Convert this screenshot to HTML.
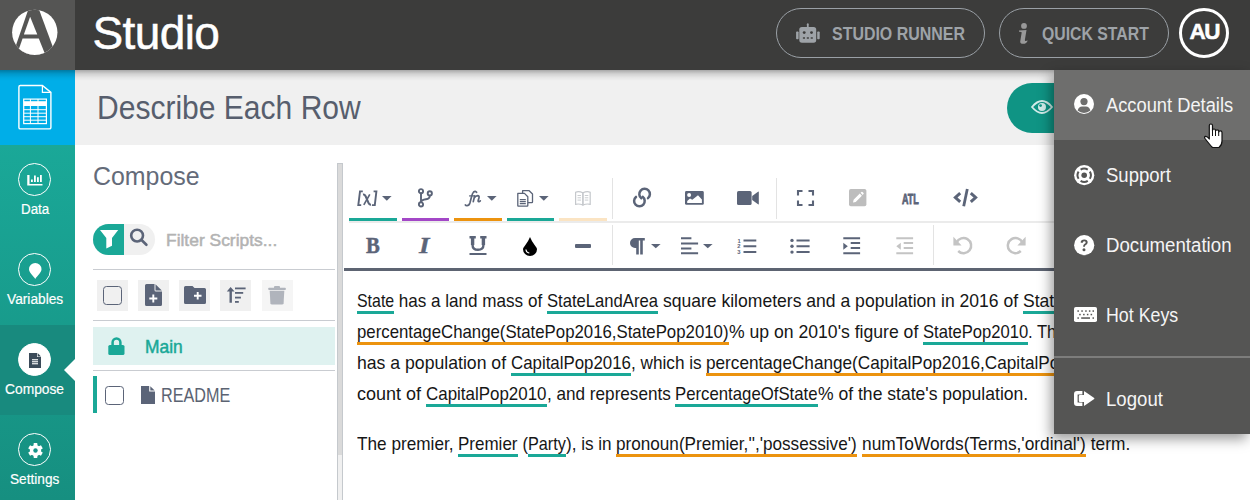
<!DOCTYPE html>
<html><head><meta charset="utf-8">
<style>
*{box-sizing:border-box;margin:0;padding:0}
html,body{width:1250px;height:500px;overflow:hidden;background:#fff;font-family:"Liberation Sans",sans-serif}
.a{position:absolute}
.sx{position:absolute;white-space:nowrap;transform-origin:0 0;line-height:1}
svg{position:absolute;overflow:visible}
#top{left:0;top:0;width:1250px;height:70px;background:#3c3c3b}
#logo{left:0;top:0;width:75px;height:70px;background:#555554}
.pill{border:1px solid #9aa0a6;border-radius:25px;height:50px;top:8px}
.pilltxt{font-weight:bold;font-size:18px;color:#9ea3a8}
#side{left:0;top:70px;width:75px;height:430px;background:linear-gradient(#1aa898 0px,#1aa898 75px,#168f80 430px)}
#blue{left:0;top:70px;width:75px;height:75px;background:#00aee8}
#active{left:0;top:325px;width:75px;height:90px;background:#188a7e}
.navc{left:18px;width:33px;height:33px;border:1px solid #fff;border-radius:50%}
.navt{color:#fff;font-size:15.5px;-webkit-text-stroke:0.2px #fff}
#hdr{left:75px;top:70px;width:1175px;height:75px;background:#f0f0f0}
#topshadow{left:0;top:70px;width:1250px;height:11px;background:linear-gradient(rgba(0,0,0,.3),rgba(0,0,0,.13) 35%,rgba(0,0,0,.04) 70%,rgba(0,0,0,0))}
#eyebtn{left:1007px;top:83px;width:120px;height:50px;border-radius:25px;background:#0f9484}
#splitter{left:337px;top:163px;width:6px;height:340px;background:linear-gradient(#dadada 0,#dadada 291px,#f0f0f0 291px);border:1px solid #c5c9cd}
#menu{left:1054px;top:70px;width:196px;height:364px;background:#555554;box-shadow:-3px 5px 12px rgba(0,0,0,.4)}
.mit{font-size:20px;color:#f4f4f4}
.ln{position:absolute;left:357px;font-size:17.2px;line-height:20px;color:#1e1e1e;white-space:nowrap}
.tw{position:absolute;box-sizing:content-box;height:20.4px;line-height:20px;font-size:17.8px;color:#161616;white-space:pre}
.tw span{display:inline-block;transform-origin:0 0}
.v{border-bottom:3px solid #1aa897}
.f{border-bottom:3px solid #ec930f}
.ib{background:#f0f0f0;width:31px;height:31px;top:280px}
.hl{height:1px;background:#c9ccd1;left:93px;width:242px}
.ul{top:218px;height:3px}
</style></head><body>
<!-- TOP BAR -->
<div id="top" class="a"></div>
<div id="logo" class="a"></div>
<svg style="left:8px;top:6px" width="54" height="54" viewBox="0 0 500 500">
  <defs><clipPath id="lc"><circle cx="248" cy="244" r="210"/></clipPath></defs>
  <circle cx="248" cy="244" r="210" fill="#fff"/>
  <g clip-path="url(#lc)">
    <polygon points="199,0 275,0 460,500 27,500" fill="#555554"/>
    <polygon points="205,100 271,265 147,265" fill="#fff"/>
    <polygon points="135,300 285,300 365,500 65,500" fill="#fff"/>
  </g>
</svg>
<div class="sx" style="left:92.5px;top:9.5px;font-size:46px;color:#fff;letter-spacing:-0.6px;-webkit-text-stroke:0.5px #fff">Studio</div>

<div class="a pill" style="left:776px;width:209px"></div>
<svg style="left:796px;top:23px" width="24" height="20" viewBox="0 0 24 20">
  <rect x="10.9" y="0.3" width="1.8" height="5" rx="0.9" fill="#9ea3a8"/>
  <rect x="3.3" y="3.9" width="16.9" height="15.8" rx="2.6" fill="#9ea3a8"/>
  <rect x="0.1" y="8.5" width="2.5" height="7.7" rx="0.8" fill="#9ea3a8"/>
  <rect x="21.2" y="8.5" width="2.5" height="7.7" rx="0.8" fill="#9ea3a8"/>
  <circle cx="8.2" cy="9.6" r="1.45" fill="#3c3c3b"/>
  <circle cx="15.5" cy="9.6" r="1.45" fill="#3c3c3b"/>
  <rect x="6.9" y="14.3" width="2.1" height="1.4" fill="#3c3c3b"/>
  <rect x="10.8" y="14.3" width="2.1" height="1.4" fill="#3c3c3b"/>
  <rect x="14.7" y="14.3" width="2.1" height="1.4" fill="#3c3c3b"/>
</svg>
<div class="sx pilltxt" style="left:832px;top:25px;transform:scaleX(0.886)">STUDIO RUNNER</div>

<div class="a pill" style="left:999px;width:170px"></div>
<svg style="left:1018px;top:23px" width="11" height="21" viewBox="0 0 11 21">
  <circle cx="6" cy="2.9" r="2.9" fill="#999"/>
  <path d="M1 7.4 Q4.5 7 8.5 7 L6.9 16.8 Q6.7 18.2 7.6 18.1 L9.7 17.4 Q8.6 20.8 5.2 20.8 Q2 20.8 2.2 18.4 L3.7 9.6 Q3.8 8.7 1 8.8 Z" fill="#999"/>
</svg>
<div class="sx pilltxt" style="left:1042px;top:25px;transform:scaleX(0.878)">QUICK START</div>

<div class="a" style="left:1179px;top:8px;width:50px;height:50px;border:3px solid #fff;border-radius:50%"></div>
<div class="sx" style="left:1189.5px;top:21px;font-size:22.5px;font-weight:bold;color:#fff;letter-spacing:-1.6px;-webkit-text-stroke:0.5px #fff">AU</div>

<!-- SIDEBAR -->
<div id="side" class="a"></div>
<div id="blue" class="a"></div>
<div id="active" class="a"></div>
<svg style="left:0;top:70px" width="75" height="75" viewBox="0 0 75 75">
  <path d="M20 15.5 H42.4 L50.9 22.4 V57.4 Q50.9 58.9 49.4 58.9 H20.4 Q18.9 58.9 18.9 57.4 V17 Q18.9 15.5 20.4 15.5 Z" fill="none" stroke="#fff" stroke-width="1.4"/>
  <path d="M42.4 15.5 V22.4 H50.9" fill="none" stroke="#fff" stroke-width="1.2"/>
  <rect x="23.7" y="29.1" width="22.7" height="24.5" fill="none" stroke="#fff" stroke-width="1.2"/>
  <rect x="23.7" y="31.2" width="22.7" height="4.8" fill="#fff"/>
  <path d="M30.4 29 V53.6 M38 29 V53.6 M23.7 39.7 H46.4 M23.7 43.2 H46.4 M23.7 46.7 H46.4 M23.7 50.2 H46.4" stroke="#fff" stroke-width="1"/>
</svg>

<div class="a navc" style="top:163px"></div>
<svg style="left:27px;top:175px" width="16" height="11" viewBox="0 0 16 11">
  <path d="M0.25 0 V10.5 H15.5 V9 H2.5 V0 Z" fill="#fff"/>
  <rect x="4" y="4.5" width="1.8" height="2.5" fill="#fff"/>
  <rect x="7" y="0.5" width="1.8" height="6.5" fill="#fff"/>
  <rect x="10" y="2.2" width="1.8" height="4.8" fill="#fff"/>
  <rect x="13" y="0" width="1.8" height="7" fill="#fff"/>
</svg>
<div class="sx navt" style="left:21px;top:201px;transform:scaleX(0.86)">Data</div>

<div class="a navc" style="top:253px"></div>
<svg style="left:28.8px;top:262.5px" width="12.5" height="16" viewBox="0 0 12.5 16">
  <path d="M6.25 16 C4.5 13 0 9.5 0 6.25 A6.25 6.25 0 0 1 12.5 6.25 C12.5 9.5 8 13 6.25 16 Z" fill="#fff"/>
</svg>
<div class="sx navt" style="left:6.5px;top:291px;transform:scaleX(0.885)">Variables</div>

<div class="a navc" style="top:343px;background:#fff"></div>
<svg style="left:29px;top:352.75px" width="12" height="15" viewBox="0 0 12 15">
  <path d="M0 0 H8 V4 H12 V15 H0 Z" fill="#3b4a59"/>
  <path d="M8.6 0 L12 3.4 H8.6 Z" fill="#3b4a59"/>
  <rect x="3" y="6.2" width="6" height="1.1" fill="#fff"/>
  <rect x="3" y="8.2" width="6" height="1.1" fill="#fff"/>
  <rect x="3" y="10.2" width="6" height="1.1" fill="#fff"/>
</svg>
<div class="sx navt" style="left:5.3px;top:381px;transform:scaleX(0.89)">Compose</div>
<svg style="left:63px;top:358px" width="12" height="24" viewBox="0 0 12 24"><polygon points="1,12 12,1 12,23" fill="#fff"/></svg>

<div class="a navc" style="top:433px"></div>
<svg style="left:27.5px;top:443px" width="15" height="15" viewBox="-7.5 -7.5 15 15">
  <g fill="#fff">
    <circle r="5.6"/>
    <rect x="-1.9" y="-7.4" width="3.8" height="3.5" rx="0.6"/>
    <rect x="-1.9" y="-7.4" width="3.8" height="3.5" rx="0.6" transform="rotate(60)"/>
    <rect x="-1.9" y="-7.4" width="3.8" height="3.5" rx="0.6" transform="rotate(120)"/>
    <rect x="-1.9" y="-7.4" width="3.8" height="3.5" rx="0.6" transform="rotate(180)"/>
    <rect x="-1.9" y="-7.4" width="3.8" height="3.5" rx="0.6" transform="rotate(240)"/>
    <rect x="-1.9" y="-7.4" width="3.8" height="3.5" rx="0.6" transform="rotate(300)"/>
  </g>
  <circle r="2.2" fill="#16938a"/>
</svg>
<div class="sx navt" style="left:10.3px;top:471px;transform:scaleX(0.88)">Settings</div>

<!-- HEADER -->
<div id="hdr" class="a"></div>
<div class="sx" style="left:97px;top:90.7px;font-size:33px;color:#575e6d;transform:scaleX(0.91)">Describe Each Row</div>
<div id="eyebtn" class="a"></div>
<svg style="left:1031px;top:100px" width="22" height="14" viewBox="0 0 22 14">
  <path d="M1 7 Q11 -5 21 7 Q11 19 1 7 Z" fill="none" stroke="#d3ecea" stroke-width="1.8"/>
  <circle cx="11" cy="7" r="4" fill="#d3ecea"/>
  <circle cx="9.6" cy="5.6" r="1.4" fill="#0f9484"/>
</svg>
<div id="topshadow" class="a"></div>


<!-- COMPOSE PANEL -->
<div class="sx" style="left:93px;top:162.5px;font-size:26.5px;color:#646b79;transform:scaleX(0.94)">Compose</div>
<div class="a" style="left:93px;top:224px;width:62px;height:31px;border-radius:15.5px;background:#f0f0f0;overflow:hidden"><div class="a" style="left:0;top:0;width:31px;height:31px;background:#1aa897"></div></div>
<svg style="left:100px;top:230px" width="18" height="19" viewBox="0 0 18 19">
  <path d="M0 0 H18.2 L12 8 V15.8 L6.3 18.6 V8 Z" fill="#fff"/>
</svg>
<svg style="left:129px;top:228px" width="19" height="18" viewBox="0 0 19 18">
  <circle cx="8.1" cy="7.6" r="5.9" fill="none" stroke="#5b6478" stroke-width="2.6"/>
  <path d="M12.3 11.8 L17.4 16.8" stroke="#5b6478" stroke-width="2.6" stroke-linecap="round"/>
</svg>
<div class="sx" style="left:165.8px;top:231.5px;font-size:16.5px;color:#b3b3b3;-webkit-text-stroke:0.5px #b3b3b3;transform:scaleX(1.055)">Filter Scripts...</div>

<div class="a hl" style="top:269px"></div>
<div class="a ib" style="left:97px"></div>
<div class="a" style="left:103px;top:286px;width:19px;height:19px;border:1.7px solid #5b6478;border-radius:3.5px"></div>
<div class="a ib" style="left:138px"></div>
<svg style="left:145px;top:284px" width="17" height="22" viewBox="0 0 17 22">
  <path d="M1.5 0 H9.5 V6 Q9.5 7.5 11 7.5 H17 V20.5 Q17 22 15.5 22 H1.5 Q0 22 0 20.5 V1.5 Q0 0 1.5 0 Z" fill="#5b6478"/>
  <path d="M10.5 0.2 L16.8 6.5 H10.5 Z" fill="#5b6478"/>
  <path d="M8.3 10.5 V18.5 M4.3 14.5 H12.3" stroke="#fff" stroke-width="1.9"/>
</svg>
<div class="a ib" style="left:179px"></div>
<svg style="left:184px;top:286px" width="22" height="18" viewBox="0 0 22 18">
  <path d="M1.5 0 H8.5 L10.5 2 H20.5 Q22 2 22 3.5 V16.5 Q22 18 20.5 18 H1.5 Q0 18 0 16.5 V1.5 Q0 0 1.5 0 Z" fill="#5b6478"/>
  <path d="M13.7 6 V13.5 M10 9.8 H17.5" stroke="#fff" stroke-width="1.9"/>
</svg>
<div class="a ib" style="left:220px"></div>
<svg style="left:226px;top:287px" width="20" height="16" viewBox="0 0 20 16">
  <path d="M4.6 0 L8.6 4.5 H5.9 V15.8 H3.5 V4.5 H0.8 Z" fill="#5b6478"/>
  <rect x="9" y="0.5" width="10.6" height="1.8" fill="#5b6478"/>
  <rect x="9" y="5" width="8.2" height="1.8" fill="#5b6478"/>
  <rect x="9" y="9.7" width="5.9" height="1.8" fill="#5b6478"/>
  <rect x="9" y="14" width="3.8" height="1.8" fill="#5b6478"/>
</svg>
<div class="a ib" style="left:262px;background:#f5f5f5"></div>
<svg style="left:268px;top:286px" width="18" height="19" viewBox="0 0 18 19">
  <path d="M6 0.5 Q6 0 7 0 H11 Q12 0 12 0.5 V2 H6 Z" fill="#b0b4bc"/>
  <rect x="0.4" y="1.8" width="17.3" height="2.1" rx="0.5" fill="#b0b4bc"/>
  <path d="M1.7 4.8 H16.3 L15.6 17.3 Q15.4 18.5 14 18.5 H4 Q2.6 18.5 2.4 17.3 Z" fill="#b0b4bc"/>
</svg>

<div class="a hl" style="top:320px"></div>
<div class="a" style="left:93px;top:326.5px;width:242px;height:38.5px;background:#dff2f0"></div>
<svg style="left:107.5px;top:337px" width="17" height="18" viewBox="0 0 17 18">
  <path d="M4.6 8 V5.3 A3.9 3.9 0 0 1 12.4 5.3 V8" fill="none" stroke="#1aa897" stroke-width="2.5"/>
  <rect x="0.3" y="8" width="16.2" height="10" rx="1.6" fill="#1aa897"/>
</svg>
<div class="sx" style="left:145px;top:338.3px;font-size:18.5px;color:#1aa897;-webkit-text-stroke:0.5px #1aa897;transform:scaleX(0.94)">Main</div>
<div class="a hl" style="top:370px"></div>
<div class="a" style="left:93px;top:376px;width:4px;height:37px;background:#1aa897"></div>
<div class="a" style="left:104.7px;top:385.7px;width:19.3px;height:19.3px;border:1.7px solid #5b6478;border-radius:3.5px"></div>
<svg style="left:140.5px;top:386px" width="14" height="18" viewBox="0 0 14 18">
  <path d="M0 0 H8.2 V5.6 H14 V18 H0 Z" fill="#5b6478"/>
  <path d="M9.3 0.3 L13.7 4.6 H9.3 Z" fill="#5b6478"/>
</svg>
<div class="sx" style="left:161px;top:385.3px;font-size:20px;color:#5b6372;transform:scaleX(0.81)">README</div>

<div id="splitter" class="a"></div>

<!-- EDITOR TOOLBAR -->
<div class="a ul" style="left:349px;width:48px;background:#1aa897"></div>
<div class="a ul" style="left:402px;width:47px;background:#a347c7"></div>
<div class="a ul" style="left:454px;width:48px;background:#ec930f"></div>
<div class="a ul" style="left:507px;width:47px;background:#1aa897"></div>
<div class="a ul" style="left:559px;width:48px;background:#fbe4c3"></div>
<div class="a" style="left:349px;top:221px;width:901px;height:2px;background:#ebebeb"></div>
<div class="a" style="left:612px;top:178px;width:1px;height:41px;background:#e3e3e3"></div>
<div class="a" style="left:776px;top:178px;width:1px;height:41px;background:#e3e3e3"></div>
<div class="a" style="left:612px;top:225px;width:1px;height:40px;background:#e3e3e3"></div>
<div class="a" style="left:933px;top:225px;width:1px;height:40px;background:#e3e3e3"></div>
<div class="a" style="left:344px;top:268px;width:906px;height:3px;background:#5d6472"></div>


<!-- row1 -->
<svg style="left:352px;top:184px" width="30" height="28" viewBox="0 0 30 28">
  <g fill="none" stroke="#5b6478" stroke-linecap="butt">
    <path d="M10.8 7.4 H8 L6.3 21.1 H9.2" stroke-width="1.9"/>
    <path d="M21.6 7.4 H24.4 L22.8 21.1 H20" stroke-width="1.9"/>
    <path d="M11 10.5 Q12.6 10.2 13.6 12.2 L16.6 19.2 Q17.4 21 19 20.6" stroke-width="2.1"/>
    <path d="M17.8 10.4 L11.8 20.8" stroke-width="1.7"/>
  </g>
</svg>
<svg style="left:382px;top:196px" width="10" height="5" viewBox="0 0 10 5"><polygon points="0,0 9.6,0 4.8,4.8" fill="#5b6478"/></svg>
<svg style="left:417px;top:188px" width="16" height="19" viewBox="0 0 16 19">
  <g fill="none" stroke="#5b6478" stroke-width="1.9">
    <circle cx="4" cy="3.2" r="2.1"/><circle cx="12.8" cy="5.4" r="2.1"/><circle cx="4" cy="16.4" r="2.1"/>
    <path d="M4 5.5 V14.1 M12.8 7.7 Q12.8 10.8 9 11.3 Q4.5 11.8 4 14"/>
  </g>
</svg>
<svg style="left:460px;top:184px" width="24" height="24" viewBox="0 0 24 24">
  <g fill="none" stroke="#5b6478" stroke-linecap="round">
    <path d="M16.6 8.3 Q15.4 6.6 13.6 8 Q12.4 9.2 11.6 12.5 L9.9 19 Q9.1 21.7 7 21.7 Q5.7 21.7 5.3 20.9" stroke-width="1.7"/>
    <path d="M9.6 11.9 H14.6" stroke-width="1.3"/>
    <path d="M14.6 12 L13.3 17.6 M14.1 14 Q15.6 11.7 17.7 11.7 Q19.5 11.8 19 13.7 L18.2 16.5 Q17.9 17.8 18.8 17.7 Q19.5 17.5 20.3 16.8" stroke-width="1.7"/>
  </g>
</svg>
<svg style="left:487px;top:196px" width="10" height="5" viewBox="0 0 10 5"><polygon points="0,0 9.6,0 4.8,4.8" fill="#5b6478"/></svg>
<svg style="left:517px;top:190px" width="17" height="17" viewBox="0 0 17 17">
  <g fill="#fff" stroke="#5b6478" stroke-width="1.3" stroke-linejoin="round">
    <path d="M5.6 0.7 H12.2 L15.5 4 V12 Q15.5 12.6 14.9 12.6 H6.2 Q5.6 12.6 5.6 12 Z"/>
    <path d="M0.8 3.4 H7.5 L10.8 6.7 V15.6 Q10.8 16.2 10.2 16.2 H1.4 Q0.8 16.2 0.8 15.6 Z"/>
  </g>
  <path d="M2.8 9.6 H8.8 M2.8 11.6 H8.8 M2.8 13.6 H8.8" stroke="#5b6478" stroke-width="1.1"/>
</svg>
<svg style="left:539px;top:196px" width="10" height="5" viewBox="0 0 10 5"><polygon points="0,0 9.6,0 4.8,4.8" fill="#5b6478"/></svg>
<svg style="left:574.5px;top:191px" width="16" height="15" viewBox="0 0 16 15">
  <g fill="none" stroke="#c5c8cc" stroke-width="1.2">
    <path d="M0.6 1.2 Q4 0 7.8 1.8 V14 Q4 12.4 0.6 13.3 Z"/>
    <path d="M15.2 1.2 Q11.8 0 8 1.8 V14 Q11.8 12.4 15.2 13.3 Z"/>
    <path d="M2.5 4.5 H6 M2.5 6.8 H6 M2.5 9.1 H6 M9.8 4.5 H13.3 M9.8 6.8 H13.3 M9.8 9.1 H13.3" stroke-width="0.9"/>
  </g>
</svg>
<svg style="left:628px;top:184px" width="29" height="27" viewBox="0 0 29 27">
  <g fill="none" stroke="#5b6478" stroke-width="2.5" stroke-linecap="round">
    <path d="M13.34 14.28 A5.3 5.3 0 1 1 20.01 14.16"/>
    <path d="M14.66 12.82 A5.3 5.3 0 1 1 7.99 12.94"/>
  </g>
</svg>
<svg style="left:685px;top:191px" width="19" height="14" viewBox="0 0 19 14">
  <rect x="0" y="0" width="18.8" height="13.8" rx="1.4" fill="#5b6478"/>
  <circle cx="4.1" cy="3.9" r="2" fill="#fff"/>
  <path d="M2.2 11.9 V10 L5 7.4 L7.3 8.7 L13 4.2 L16.9 8.4 V11.9 Z" fill="#fff"/>
</svg>
<svg style="left:737px;top:191px" width="22" height="14" viewBox="0 0 22 14">
  <rect x="0" y="0" width="14.6" height="14" rx="1.6" fill="#5b6478"/>
  <path d="M15.2 5 L21.4 0.6 Q21.8 0.5 21.8 1 V13 Q21.8 13.5 21.4 13.4 L15.2 9 Z" fill="#5b6478"/>
</svg>
<svg style="left:797px;top:190px" width="17" height="16" viewBox="0 0 17 16">
  <path d="M1 5.5 V1 H5.5 M11.5 1 H16 V5.5 M16 10.5 V15 H11.5 M5.5 15 H1 V10.5" fill="none" stroke="#5b6478" stroke-width="2.1"/>
</svg>
<svg style="left:849px;top:189px" width="17.5" height="17.5" viewBox="0 0 17.5 17.5">
  <rect x="0" y="0" width="17.4" height="17.2" rx="1.8" fill="#bdbdbd"/>
  <path d="M4 13.5 L4.6 10.8 L10.8 4.6 L12.9 6.7 L6.7 12.9 Z M11.6 3.8 L12.4 3 Q13 2.5 13.5 3 L14.5 4 Q15 4.5 14.5 5.1 L13.7 5.9 Z" fill="#fff"/>
</svg>
<div class="sx" style="left:902.3px;top:191.7px;font-size:14px;font-weight:bold;color:#5b6478;-webkit-text-stroke:0.8px #5b6478;transform:scaleX(0.64)">ATL</div>
<svg style="left:953px;top:188px" width="25" height="19" viewBox="0 0 25 19">
  <path d="M7.2 5.2 L2.4 9.5 L7.2 13.8 M17.8 5.2 L22.6 9.5 L17.8 13.8" fill="none" stroke="#5b6478" stroke-width="3" stroke-linejoin="miter"/>
  <path d="M14.3 1 L10.7 18.3" stroke="#5b6478" stroke-width="2.8"/>
</svg>

<!-- row2 -->
<div class="sx" style="left:365.5px;top:234px;font-family:'Liberation Serif',serif;font-weight:bold;font-size:23.5px;color:#5b6478;-webkit-text-stroke:0.5px #5b6478;transform:scaleX(0.88)">B</div>
<div class="sx" style="left:418.5px;top:234px;font-family:'Liberation Serif',serif;font-weight:bold;font-style:italic;font-size:23.5px;color:#5b6478;-webkit-text-stroke:0.3px #5b6478;transform:scaleX(1.15)">I</div>
<svg style="left:469px;top:236px" width="18" height="19" viewBox="0 0 18 19">
  <path d="M0.5 1.2 H6.8 M11.2 1.2 H17.5 M3.6 1 V9.2 Q3.6 13.8 9 13.8 Q14.4 13.8 14.4 9.2 V1" fill="none" stroke="#5b6478" stroke-width="2.4"/><path d="M3.6 1 V9 M14.4 1 V9" stroke="#5b6478" stroke-width="3.4"/>
  <rect x="0.5" y="17" width="17" height="2" fill="#5b6478"/>
</svg>
<svg style="left:523px;top:236.5px" width="14" height="19" viewBox="0 0 14 19">
  <path d="M7 0 Q8.8 4.5 11.6 8 Q14 11 14 12.3 A7 6.7 0 0 1 0 12.3 Q0 11 2.4 8 Q5.2 4.5 7 0 Z" fill="#000"/>
  <path d="M3 12.8 Q3.2 15.6 6 16" fill="none" stroke="#fff" stroke-width="1.1" stroke-linecap="round"/>
</svg>
<div class="a" style="left:574.6px;top:243.8px;width:16.8px;height:4.2px;border-radius:1px;background:#5b6478"></div>
<svg style="left:629px;top:237.5px" width="16" height="17" viewBox="0 0 16 17">
  <path d="M15.8 0 V2.6 H13.8 V16.5 H11.2 V2.6 H9.8 V16.5 H7.2 V10 H6 A5 5 0 0 1 6 0 Z" fill="#5b6478"/>
</svg>
<svg style="left:651px;top:243.5px" width="10" height="5" viewBox="0 0 10 5"><polygon points="0,0 9.6,0 4.8,4.3" fill="#5b6478"/></svg>
<svg style="left:680.8px;top:237px" width="18" height="18" viewBox="0 0 18 18">
  <path d="M0 1.3 H10.4 M0 6.6 H17.1 M0 11.4 H10.4 M0 16.2 H17.1" stroke="#5b6478" stroke-width="2"/>
</svg>
<svg style="left:703px;top:243.5px" width="10" height="5" viewBox="0 0 10 5"><polygon points="0,0 9.6,0 4.8,4.3" fill="#5b6478"/></svg>
<svg style="left:737px;top:236.5px" width="20" height="18" viewBox="0 0 20 18">
  <path d="M6.5 3.4 H19.3 M6.5 9.2 H19.3 M6.5 15.1 H19.3" stroke="#5b6478" stroke-width="2"/>
  <text x="0.6" y="5.6" font-family="Liberation Sans" font-weight="bold" font-size="5.8" fill="#5b6478">1</text>
  <text x="0.3" y="11.4" font-family="Liberation Sans" font-weight="bold" font-size="5.8" fill="#5b6478">2</text>
  <text x="0.3" y="17.4" font-family="Liberation Sans" font-weight="bold" font-size="5.8" fill="#5b6478">3</text>
</svg>
<svg style="left:789.5px;top:236.5px" width="20" height="18" viewBox="0 0 20 18">
  <circle cx="2" cy="3.4" r="1.7" fill="#5b6478"/><circle cx="2" cy="9.2" r="1.7" fill="#5b6478"/><circle cx="2" cy="15.1" r="1.7" fill="#5b6478"/>
  <path d="M6.5 3.4 H19.6 M6.5 9.2 H19.6 M6.5 15.1 H19.6" stroke="#5b6478" stroke-width="2"/>
</svg>
<svg style="left:843px;top:237px" width="18" height="18" viewBox="0 0 18 18">
  <path d="M0.3 1.3 H17.1 M7.7 6.1 H17.1 M7.7 10.9 H17.1 M0.3 16.2 H17.1" stroke="#5b6478" stroke-width="2"/>
  <polygon points="0.3,5.8 4.8,9.2 0.3,12.8" fill="#5b6478"/>
</svg>
<svg style="left:895.5px;top:237px" width="18" height="18" viewBox="0 0 18 18">
  <path d="M0.3 1.3 H17.1 M7.7 6.1 H17.1 M7.7 10.9 H17.1 M0.3 16.2 H17.1" stroke="#c4c4c4" stroke-width="2"/>
  <polygon points="4.8,5.8 0.3,9.2 4.8,12.8" fill="#c4c4c4"/>
</svg>
<svg style="left:953px;top:236px" width="20" height="19" viewBox="0 0 20 19">
  <path d="M3.6 6.5 A7.6 7.6 0 1 1 5.2 15" fill="none" stroke="#c4c4c4" stroke-width="2.5"/>
  <polygon points="0.4,0.8 0.4,9.5 8.6,9.5" fill="#c4c4c4"/>
</svg>
<svg style="left:1006px;top:236px" width="20" height="19" viewBox="0 0 20 19">
  <g transform="translate(20,0) scale(-1,1)">
  <path d="M3.6 6.5 A7.6 7.6 0 1 1 5.2 15" fill="none" stroke="#c4c4c4" stroke-width="2.5"/>
  <polygon points="0.4,0.8 0.4,9.5 8.6,9.5" fill="#c4c4c4"/>
  </g>
</svg>


<!-- EDITOR TEXT -->
<div class="tw v" style="left:357.2px;top:291.0px;width:37.2px"><span style="transform:scaleX(0.8957)">State</span></div>
<div class="tw" style="left:394.4px;top:291.0px;width:152.9px"><span style="transform:scaleX(0.9608)"> has a land mass of </span></div>
<div class="tw v" style="left:547.3px;top:291.0px;width:111.0px"><span style="transform:scaleX(0.9356)">StateLandArea</span></div>
<div class="tw" style="left:658.3px;top:291.0px;width:365.0px"><span style="transform:scaleX(0.9873)"> square kilometers and a population in 2016 of </span></div>
<div class="tw v" style="left:1023.3px;top:291.0px;width:111.3px"><span style="transform:scaleX(0.9873)">StatePop2016</span></div>
<div class="tw" style="left:1134.6px;top:291.0px;width:72.2px"><span style="transform:scaleX(0.9873)">, which is</span></div>
<div class="tw f" style="left:357.0px;top:321.8px;width:371.5px"><span style="transform:scaleX(0.9441)">percentageChange(StatePop2016,StatePop2010)</span></div>
<div class="tw" style="left:728.5px;top:321.8px;width:194.2px"><span style="transform:scaleX(0.9899)">% up on 2010's figure of </span></div>
<div class="tw v" style="left:922.7px;top:321.8px;width:105.3px"><span style="transform:scaleX(0.9342)">StatePop2010</span></div>
<div class="tw" style="left:1028.0px;top:321.8px;width:155.7px"><span style="transform:scaleX(0.9342)">. The capital, Capital,</span></div>
<div class="tw" style="left:357.0px;top:352.7px;width:154.0px"><span style="transform:scaleX(0.9921)">has a population of </span></div>
<div class="tw v" style="left:511.0px;top:352.7px;width:120.0px"><span style="transform:scaleX(0.9483)">CapitalPop2016</span></div>
<div class="tw" style="left:631.0px;top:352.7px;width:75.4px"><span style="transform:scaleX(0.9659)">, which is </span></div>
<div class="tw f" style="left:706.4px;top:352.7px;width:406.8px"><span style="transform:scaleX(0.9659)">percentageChange(CapitalPop2016,CapitalPop2010)</span></div>
<div class="tw" style="left:1113.2px;top:352.7px;width:39.1px"><span style="transform:scaleX(0.9659)">% up</span></div>
<div class="tw" style="left:357.0px;top:383.5px;width:69.1px"><span style="transform:scaleX(1.0129)">count of </span></div>
<div class="tw v" style="left:426.1px;top:383.5px;width:120.5px"><span style="transform:scaleX(0.9522)">CapitalPop2010</span></div>
<div class="tw" style="left:546.6px;top:383.5px;width:128.6px"><span style="transform:scaleX(0.9636)">, and represents </span></div>
<div class="tw v" style="left:675.2px;top:383.5px;width:142.6px"><span style="transform:scaleX(0.9428)">PercentageOfState</span></div>
<div class="tw" style="left:817.8px;top:383.5px;width:210.2px"><span style="transform:scaleX(0.9870)">% of the state's population.</span></div>
<div class="tw" style="left:357.0px;top:433.8px;width:101.3px"><span style="transform:scaleX(0.9669)">The premier, </span></div>
<div class="tw v" style="left:458.3px;top:433.8px;width:59.5px"><span style="transform:scaleX(0.9558)">Premier</span></div>
<div class="tw" style="left:517.8px;top:433.8px;width:10.1px"><span style="transform:scaleX(0.9287)"> (</span></div>
<div class="tw v" style="left:527.9px;top:433.8px;width:37.9px"><span style="transform:scaleX(0.9129)">Party</span></div>
<div class="tw" style="left:565.8px;top:433.8px;width:50.4px"><span style="transform:scaleX(0.9623)">), is in </span></div>
<div class="tw f" style="left:616.2px;top:433.8px;width:240.7px"><span style="transform:scaleX(0.9636)">pronoun(Premier,'','possessive')</span></div>
<div class="tw" style="left:856.9px;top:433.8px;width:5.4px"><span style="transform:scaleX(1.0902)"> </span></div>
<div class="tw f" style="left:862.3px;top:433.8px;width:223.7px"><span style="transform:scaleX(0.9735)">numToWords(Terms,'ordinal')</span></div>
<div class="tw" style="left:1086.0px;top:433.8px;width:44.2px"><span style="transform:scaleX(0.9724)"> term.</span></div>

<!-- MENU -->

<div id="menu" class="a"></div>
<div class="a" style="left:1054px;top:70px;width:196px;height:70px;background:#6e6e6d"></div>
<div class="a" style="left:1054px;top:356px;width:196px;height:2px;background:#7d7d7c"></div>
<svg style="left:1073.5px;top:94.3px" width="20" height="20" viewBox="0 0 20 20">
  <defs><clipPath id="uc"><circle cx="10" cy="10" r="10"/></clipPath></defs>
  <circle cx="10" cy="10" r="10" fill="#fff"/>
  <circle cx="10" cy="7.6" r="3.6" fill="#6e6e6d"/>
  <path d="M3.6 16.6 Q4.8 12.6 8 12.6 H12 Q15.2 12.6 16.4 16.6 Q13.6 19 10 19 Q6.4 19 3.6 16.6 Z" fill="#6e6e6d"/>
</svg>
<div class="sx mit" style="left:1105.5px;top:95px;transform:scaleX(0.915)">Account Details</div>
<svg style="left:1074px;top:164.5px" width="20.4" height="20.4" viewBox="-10.2 -10.2 20.4 20.4">
  <circle r="10.1" fill="#fff"/>
  <circle r="2.8" fill="#555554"/>
  <g fill="none" stroke="#555554" stroke-width="2">
    <path d="M-3.6 -5.6 A6.6 6.6 0 0 1 3.6 -5.6"/>
    <path d="M-3.6 5.6 A6.6 6.6 0 0 0 3.6 5.6"/>
    <path d="M-5.6 -3.6 A6.6 6.6 0 0 0 -5.6 3.6"/>
    <path d="M5.6 -3.6 A6.6 6.6 0 0 1 5.6 3.6"/>
  </g>
</svg>
<div class="sx mit" style="left:1105.5px;top:165px;transform:scaleX(0.926)">Support</div>
<svg style="left:1074px;top:234.5px" width="20.4" height="20.4" viewBox="0 0 20.4 20.4">
  <circle cx="10.2" cy="10.2" r="10.1" fill="#fff"/>
  <path d="M6.6 7.6 Q6.8 4.4 10.3 4.4 Q13.7 4.4 13.7 7.3 Q13.7 9.2 11.6 10.2 Q10.9 10.6 10.9 11.8 H9.1 Q9 9.6 10.6 8.8 Q11.7 8.2 11.7 7.4 Q11.7 6.2 10.2 6.2 Q8.8 6.2 8.5 7.9 Z" fill="#555554"/>
  <circle cx="10" cy="14.7" r="1.5" fill="#555554"/>
</svg>
<div class="sx mit" style="left:1106px;top:235px;transform:scaleX(0.933)">Documentation</div>
<svg style="left:1073.7px;top:306.9px" width="23" height="15" viewBox="0 0 23 15">
  <rect x="0" y="0" width="23" height="15" rx="1.8" fill="#fff"/>
  <g fill="#555554">
    <rect x="3.4" y="3.3" width="1.5" height="1.5"/><rect x="7.3" y="3.3" width="1.5" height="1.5"/><rect x="11.2" y="3.3" width="1.5" height="1.5"/><rect x="14.9" y="3.3" width="1.5" height="1.5"/><rect x="18.5" y="3.3" width="1.5" height="1.5"/>
    <rect x="5.2" y="6.8" width="1.5" height="1.5"/><rect x="9.1" y="6.8" width="1.5" height="1.5"/><rect x="12.9" y="6.8" width="1.5" height="1.5"/><rect x="16.6" y="6.8" width="1.5" height="1.5"/>
    <rect x="3.4" y="10.3" width="1.5" height="1.5"/><rect x="7.2" y="10.3" width="8.8" height="1.5"/><rect x="18.5" y="10.3" width="1.5" height="1.5"/>
  </g>
</svg>
<div class="sx mit" style="left:1106.3px;top:305px;transform:scaleX(0.89)">Hot Keys</div>
<svg style="left:1073.7px;top:390.9px" width="21" height="15" viewBox="0 0 21 15">
  <path d="M8.4 0 H3 Q0 0 0 3 V12 Q0 15 3 15 H8.4 V11.4 H3.6 V3.6 H8.4 Z" fill="#fff"/>
  <path d="M4.8 5.2 Q4.8 4 6 4 H10 V0.6 Q10 -0.2 10.8 0.4 L20.2 7.1 Q20.6 7.5 20.2 7.9 L10.8 14.6 Q10 15.2 10 14.4 V11 H6 Q4.8 11 4.8 9.8 Z" fill="#fff"/>
</svg>
<div class="sx mit" style="left:1106px;top:389px;transform:scaleX(0.93)">Logout</div>
<svg style="left:1195px;top:115px" width="35" height="35" viewBox="0 0 35 35">
  <path d="M14.3 10.5 Q14.3 9 15.9 9 Q17.5 9 17.5 10.5 L17.5 15.5 Q17.5 14 19 14 Q20.5 14 20.5 15.5 L20.5 16 Q20.5 14.8 22.1 14.8 Q23.7 14.8 23.7 16.2 L23.7 17 Q23.7 15.8 25.3 15.8 Q27 15.8 27 17.5 L27 26 Q27 30 24 32.5 L17.5 32.5 Q15 30 10 23.5 Q9 22 10.3 21.4 Q11.8 20.8 14.3 24 Z" fill="#fff" stroke="#111" stroke-width="1.2" stroke-linejoin="round"/>
  <path d="M17.5 15.5 V21 M20.5 16 V21 M23.7 17 V21" stroke="#111" stroke-width="1"/>
</svg>

</body></html>
